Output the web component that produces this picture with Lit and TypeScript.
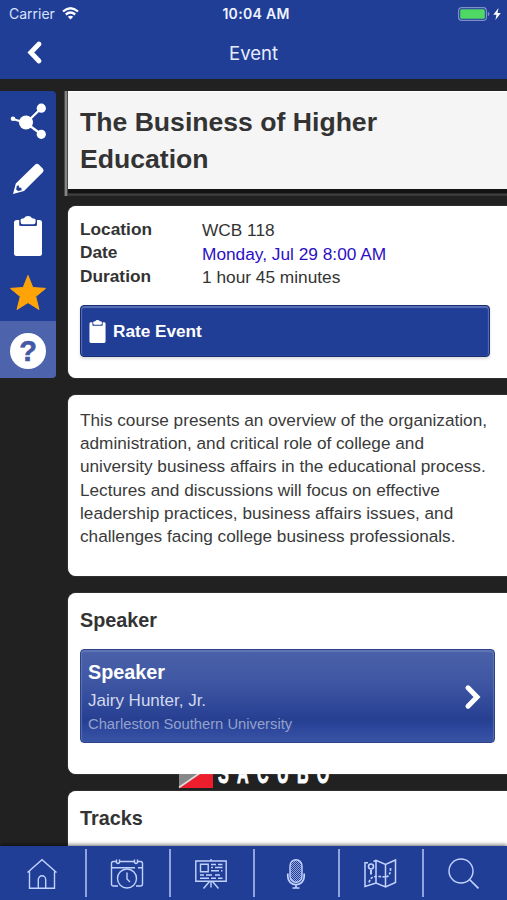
import { LitElement, html, css, svg } from "lit";
import { customElement } from "lit/decorators.js";

const clipboard = html`<svg class="clip" viewBox="0 0 28 40" fill="#fff">
  <path d="M3 4H5.200V8.500Q5.200 10 6.700 10H21.600Q23 10 23 8.500V4H25.500Q28 4 28 6.500V37.500Q28 40 25.500 40H2.500Q0 40 0 37.500V6.500Q0 4 3 4Z"/>
  <path d="M6.600 4Q6.600 3 7.500 2.800L10 2.300Q11.200 0 14 0T18.200 2.300L20.700 2.800Q21.600 3 21.600 4V6Q21.600 8.300 19.500 8.300H8.700Q6.600 8.300 6.600 6Z"/>
</svg>`;

const tabIcons = [
  svg`<path d="M1.500 13.500L16 .800 30.500 13.500M3.500 12.500V29.300H28.500V12.500"/><path d="M12.300 29V20.500a3.700 3.700 0 0 1 7.400 0V29"/>`,
  svg`<path d="M7 27H2.500Q.500 27 .500 25V4.500Q.500 2.500 2.500 2.500H5.500M8.500 2.500H23.500M26.500 2.500H29.500Q31.500 2.500 31.500 4.500V25Q31.500 27 29.500 27H25M.500 8.800H24M27 8.800H31.500"/>
      <path d="M5.500 .500V3.500Q7 5.500 8.500 3.500V.500M23.500 .500V3.500Q25 5.500 26.500 3.500V.500"/>
      <circle cx="16" cy="19.500" r="9.500"/><path d="M16 13.500V20L19 23"/>`,
  svg`<path d="M.800 2H31.200V22.300H.800ZM16 0V2M14.500 22.500L8.500 29.500M17.500 22.500L23.500 29.500M16 22.500V28.500M5.500 5.300H13.200V12.800H5.500Z"/>
      <path d="M16 5.500H21M23 5.500H27.500M16 8.500H18M20 8.500H27.500M16 11.800H24M26 11.800H27.500M5 16H9M11 16H17M20 16H25M5 19.200H14M16 19.200H21M23 19.200H27.500"/>`,
  svg`<rect x="10" y=".700" width="12" height="22.500" rx="6" fill="url(#mesh)"/><path d="M7.800 14.500V17.500a8.200 8.200 0 0 0 16.400 0V14.500M16 25.700V28.800M12.500 29H19.500" stroke-width="1.700"/>`,
  svg`<path d="M4 3.800H1V27.500L12 24 21.500 28 31.500 23.500V1L21.500 5.500 12 1.300 9.500 2.500M12 1.300V24M21.500 5.500V28" stroke-width="1.500"/>
      <circle cx="7" cy="7.500" r="2.500" stroke-width="1.600"/><path d="M7 11V15.500" stroke-width="2"/><path stroke-width="1.600" stroke-dasharray="2.600 1.400" d="M5 23.500Q6.500 17.500 12 17.500T21.500 18Q27 17 26.500 8.500"/>`,
  svg`<circle cx="13" cy="12" r="12"/><path d="M21.500 20.500L30.500 29.300" stroke-width="1.700"/>`,
];

@customElement("app-root")
export class AppRoot extends LitElement {
  static styles = css`
    :host {
      display: flex; flex-direction: column; position: relative;
      width: 507px; height: 900px; overflow: hidden;
      background: #212121; color: #333;
      font-family: "Liberation Sans", Arial, sans-serif;
    }
    * { box-sizing: border-box; }
    svg { display: block; flex: none; overflow: visible; }
    .top { height: 79px; flex: none; background: #213e97; color: #f0f4ff; }
    .status {
      height: 27px; display: grid; grid-template-columns: 1fr auto 1fr; align-items: center;
      padding: 0 6px 0 9px; font-family: Inter, sans-serif; font-size: 14px;
    }
    .carrier { display: flex; align-items: center; gap: 7px; color: #d9e2ff; }
    .time { font-weight: 600; letter-spacing: .3px; padding-left: 2px; }
    .power { display: flex; justify-content: flex-end; align-items: center; gap: 3px; }
    .nav {
      height: 52px; display: grid; grid-template-columns: 1fr auto 1fr; align-items: center;
      padding: 0 27px;
      font-family: Inter, sans-serif; font-size: 18.500px; color: #e6edff;
    }
    .body { display: flex; flex: 1; min-height: 0; padding-top: 12px; gap: 12px; overflow: hidden; position: relative; }
    .tools {
      width: 56px; height: 287px; flex: none; background: #213e97;
      border-radius: 0 4px 4px 0; overflow: hidden; display: grid; grid-template-rows: 58px 58px 57px 57px 57px;
    }
    .tool { display: grid; place-items: center; }
    .help { background: #4d63ac; }
    .tool .clip { width: 28px; height: 40px; }
    .badge {
      width: 36px; height: 36px; border-radius: 50%; background: #fff; color: #4558a5;
      font: bold 29px/37px "Liberation Sans", Arial, sans-serif; text-align: center; margin-top: 3px;
      -webkit-text-stroke: .6px #4558a5;
    }
    .main { flex: 1; min-width: 0; z-index: 1; }
    .title {
      height: 98px; background: #f5f5f5; padding: 12px 12px 0; margin-bottom: 17px;
      border-top: 1px solid #fff; position: relative;
      font-size: 26.600px; line-height: 37px; font-weight: bold;
    }
    .title h1 { margin: 0; font: inherit; }
    .title::before {
      content: ""; position: absolute; left: -4px; top: -1px; width: 4px; height: 105px;
      background: linear-gradient(90deg, #494949 0 1px, #858585 1px 3px, #4a4a4a 3px);
    }
    .title::after {
      content: ""; position: absolute; left: 0; right: 0; top: 97px; height: 7px;
      background: linear-gradient(#121212 0 4px, #444 5px, #333);
    }
    .card { background: #fff; border-radius: 8px 0 0 8px; padding: 12px; margin-bottom: 17px; box-shadow: 0 0 1px #bbb; }
    .details { height: 172px; }
    .facts { display: grid; grid-template-columns: 122px 1fr; grid-auto-rows: 23.300px; margin: 0; line-height: 23px; font-size: 17.300px; }
    .facts dt { font-weight: bold; }
    .facts dd { margin: 0; padding-top: 1.300px; white-space: nowrap; }
    .facts .date { color: #2c0fc4; }
    .rate {
      width: 410px; height: 52px; margin-top: 17px; padding: 1px 8px 0; display: flex; align-items: center; gap: 7px;
      background: #213e97; color: #fff; font-size: 17.200px; font-weight: bold;
      border: 1px solid #172c73; border-radius: 4px;
      box-shadow: inset 0 1px 1px 1px #5a70b4, 0 2px 3px #0002;
    }
    .rate .clip { width: 17px; height: 23px; }
    .about { height: 181px; padding-top: 14px; }
    .about p { margin: 0; font-size: 17.200px; line-height: 23.200px; white-space: nowrap; color: #3a3a3a; }
    .speakers { height: 181px; }
    .card h2 { margin: 0; padding-top: 2px; font-size: 19.800px; line-height: 26px; }
    .person {
      width: 415px; height: 94px; margin-top: 16px; padding: 10px 13px 0 7px; color: #fff;
      display: flex; justify-content: space-between;
      border: 1px solid #2b428b; border-radius: 4px;
      background: linear-gradient(#4a61a9, #4058a4 32%, #263f91 76%, #2b469b 84%, #3a54a5);
      box-shadow: inset 0 1px 1px 1px #6f83c099;
    }
    .role { font-size: 19.800px; font-weight: bold; line-height: 25px; }
    .name { font-size: 17px; line-height: 23px; margin-top: 4px; color: #d2d9ed; }
    .org { font-size: 14.750px; line-height: 22px; margin-top: 1px; color: #94a1cb; }
    .chev { margin-top: 24px; }
    .tracks { height: 90px; }
    .sponsor {
      position: absolute; left: 179px; top: 669px; height: 40px; display: flex; align-items: flex-end; gap: 5px;
    }
    .wordmark {
      color: #fff; font: bold 29px/29px "Liberation Sans", Arial, sans-serif; letter-spacing: 15px;
      -webkit-text-stroke: 1px #fff;
      transform: scaleX(.555); transform-origin: 0 100%; white-space: nowrap; height: 29px;
    }
    .tabs {
      height: 54px; flex: none; display: grid; grid-template-columns: repeat(6, 84.400px); z-index: 2;
      background: #213e97; box-shadow: 0 -1px 4px #0009; padding: 3px 0 3px 2.300px;
    }
    .tab { display: grid; place-items: center; border-right: 2px solid #8fa3dc; padding: 1px 2px 0 0; }
    .tab:last-child { border-color: transparent; }
    .tab svg { width: 32px; height: 30px; fill: none; stroke: #c2d2ff; stroke-width: 1.400; }
  `;

  render() {
    return html`
      <header class="top">
        <div class="status">
          <span class="carrier">Carrier
            <svg width="17" height="13" viewBox="0 0 17 13" fill="none" stroke="#fff" stroke-width="2.300">
              <path d="M1 4.500Q8.500-2 16 4.500M3.800 7.500Q8.500 3.500 13.200 7.500"/><path d="M5.800 9.700Q8.500 7.700 11.200 9.700L8.500 12.500Z" fill="#fff" stroke="none"/>
            </svg>
          </span>
          <span class="time">10:04 AM</span>
          <span class="power">
            <svg width="32" height="14" viewBox="0 0 32 14">
              <rect x=".600" y=".600" width="27.800" height="12.800" rx="3.200" fill="none" stroke="#7e91c6" stroke-width="1.200"/>
              <rect x="2.200" y="2.200" width="24.600" height="9.600" rx="1.500" fill="#4fd964"/>
              <path d="M29.800 4.800Q31.500 5.500 31.500 7T29.800 9.200Z" fill="#7e91c6"/>
            </svg>
            <svg width="8" height="12" viewBox="0 0 8 12"><path d="M5.500 0L.300 6.700H3.500L2.400 12 7.800 5H4.500Z" fill="#fff"/></svg>
          </span>
        </div>
        <div class="nav">
          <svg width="16" height="22" viewBox="0 0 16 22" fill="none" stroke="#fff" stroke-width="4.800" stroke-linecap="round"><path d="M12 2L3.800 10.500 12 19"/></svg>
          <span>Event</span>
        </div>
      </header>
      <div class="body">
        <nav class="tools">
          <span class="tool"><svg width="36" height="36" viewBox="0 0 36 36" fill="#fff">
            <path d="M3 17L16 21 31 6.500M16 21L31 32" fill="none" stroke="#fff" stroke-width="2.300"/><circle cx="16" cy="20.500" r="7"/><circle cx="31.300" cy="6.200" r="4.600"/><circle cx="31.300" cy="32.300" r="4.600"/><circle cx="3" cy="16.700" r="2.300"/></svg></span>
          <span class="tool"><svg width="31" height="31" viewBox="0 0 31 31" fill="#fff">
            <path fill-rule="evenodd" d="M0 31L2.800 20.500 22 1.700Q24 0 26 1.700L29.800 5.500Q31.500 7.500 29.800 9.300L11 28ZM3.800 23L3.200 26.500 5 28 8.700 27.300 8.300 24.700 6 24.500 5.800 22.300Z"/></svg></span>
          <span class="tool">${clipboard}</span>
          <span class="tool"><svg width="36" height="36" viewBox="0 0 36 36"><path d="M18 0.500L22.800 12.500 35.500 13.400 25.700 21.600 29 34.500 18 27.600 7 34.500 10.300 21.600 .500 13.400 13.200 12.500Z" fill="#ffa408" stroke="#ffa408" stroke-linejoin="round"/></svg></span>
          <span class="tool help"><span class="badge">?</span></span>
        </nav>
        <main class="main">
          <section class="title"><h1>The Business of Higher<br />Education</h1></section>
          <section class="card details">
            <dl class="facts">
              <dt>Location</dt><dd>WCB 118</dd>
              <dt>Date</dt><dd class="date">Monday, Jul 29 8:00 AM</dd>
              <dt>Duration</dt><dd>1 hour 45 minutes</dd>
            </dl>
            <div class="rate">${clipboard}<span>Rate Event</span></div>
          </section>
          <section class="card about">
            <p>This course presents an overview of the organization,<br />administration, and critical role of college and<br />university business affairs in the educational process.<br />Lectures and discussions will focus on effective<br />leadership practices, business affairs issues, and<br />challenges facing college business professionals.</p>
          </section>
          <section class="card speakers">
            <h2>Speaker</h2>
            <div class="person">
              <div>
                <div class="role">Speaker</div>
                <div class="name">Jairy Hunter, Jr.</div>
                <div class="org">Charleston Southern University</div>
              </div>
              <svg class="chev" width="16" height="26" viewBox="0 0 16 26" fill="none" stroke="#fff" stroke-width="5" stroke-linecap="round"><path d="M3 3.800L12 13 3 22.200"/></svg>
            </div>
          </section>
          <section class="card tracks"><h2>Tracks</h2></section>
        </main>
        <div class="sponsor">
          <svg width="34" height="40" viewBox="0 0 34 40"><path d="M0 0H34V40H0Z" fill="#ec1e2d"/><path d="M0 0H34V17L0 40Z" fill="#858887"/><path d="M34 16L0 39.500" stroke="#ddd" stroke-width="1.600"/></svg>
          <span class="wordmark">SACUBO</span>
        </div>
      </div>
      <footer class="tabs">
        ${tabIcons.map((icon) => html`<div class="tab"><svg viewBox="0 0 32 30">
          <defs><pattern id="mesh" width="2" height="2" patternUnits="userSpaceOnUse"><path d="M0 0H1V1H0ZM1 1H2V2H1Z" fill="#92a7df" stroke="none"/></pattern></defs>${icon}</svg></div>`)}
      </footer>
    `;
  }
}
